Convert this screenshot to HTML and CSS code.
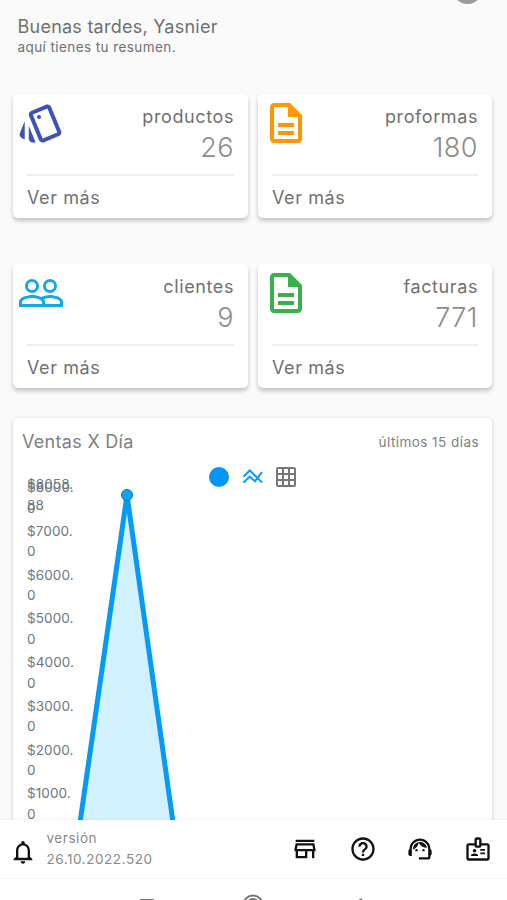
FILE: index.html
```html
<!DOCTYPE html>
<html lang="es">

<head>
    <meta charset="UTF-8">
    <meta name="viewport" content="width=device-width, initial-scale=1.0">
    <title>Resumen</title>
    <link rel="stylesheet" href="styles.css">
</head>

<body>
    <div class="app">
        <main class="content">
            <span class="avatar"></span>
            <header class="greeting">
                <h1>Buenas tardes, Yasnier</h1>
                <p>aquí tienes tu resumen.</p>
            </header>

            <section class="cards">
                <article class="card">
                    <div class="card-top">
                        <svg class="card-icon blue" viewBox="0 0 24 24">
                            <path d="M2.53 19.65l1.34.56v-9.03l-2.43 5.86c-.41 1.02.08 2.19 1.09 2.61zm19.5-3.7L17.07 3.98c-.31-.75-1.04-1.21-1.81-1.23-.26 0-.53.04-.79.15L7.1 5.95c-.75.31-1.21 1.03-1.23 1.8-.01.27.04.54.15.8l4.96 11.97c.31.76 1.05 1.22 1.83 1.23.26 0 .52-.05.77-.15l7.36-3.05c1.02-.42 1.51-1.59 1.09-2.6zm-9.2 3.8L7.87 7.79l7.35-3.04h.01l4.95 11.95-7.35 3.05zM5.88 19.75c0 1.1.9 2 2 2h1.45l-3.45-8.34v6.34z"/>
                            <circle cx="11" cy="9" r="1"/>
                        </svg>
                        <div class="card-data">
                            <h2>productos</h2>
                            <strong>26</strong>
                        </div>
                    </div>
                    <a class="more" href="#">Ver más</a>
                </article>

                <article class="card">
                    <div class="card-top">
                        <svg class="card-icon orange" viewBox="0 0 24 24">
                            <path d="M8 16h8v2H8zm0-4h8v2H8zm6-10H6c-1.1 0-2 .9-2 2v16c0 1.1.89 2 1.99 2H18c1.1 0 2-.9 2-2V8l-6-6zm4 18H6V4h7v5h5v11z"/>
                        </svg>
                        <div class="card-data">
                            <h2>proformas</h2>
                            <strong>180</strong>
                        </div>
                    </div>
                    <a class="more" href="#">Ver más</a>
                </article>

                <article class="card">
                    <div class="card-top">
                        <svg class="card-icon cyan" viewBox="0 0 24 24">
                            <path d="M16.5 13c-1.2 0-3.07.34-4.5 1-1.43-.67-3.3-1-4.5-1C5.33 13 1 14.08 1 16.25V19h22v-2.75c0-2.17-4.33-3.25-6.5-3.25zm-4 4.5h-10v-1.25c0-.54 2.56-1.75 5-1.75s5 1.21 5 1.75v1.25zm9 0H14v-1.25c0-.46-.2-.86-.52-1.22.88-.3 1.96-.53 3.02-.53 2.44 0 5 1.21 5 1.75v1.25z"/>
                            <circle class="ring" cx="7.5" cy="8.5" r="2.75"/>
                            <circle class="ring" cx="16.5" cy="8.5" r="2.75"/>
                        </svg>
                        <div class="card-data">
                            <h2>clientes</h2>
                            <strong>9</strong>
                        </div>
                    </div>
                    <a class="more" href="#">Ver más</a>
                </article>

                <article class="card">
                    <div class="card-top">
                        <svg class="card-icon green" viewBox="0 0 24 24">
                            <path d="M8 16h8v2H8zm0-4h8v2H8zm6-10H6c-1.1 0-2 .9-2 2v16c0 1.1.89 2 1.99 2H18c1.1 0 2-.9 2-2V8l-6-6zm4 18H6V4h7v5h5v11z"/>
                        </svg>
                        <div class="card-data">
                            <h2>facturas</h2>
                            <strong>771</strong>
                        </div>
                    </div>
                    <a class="more" href="#">Ver más</a>
                </article>
            </section>

            <section class="sales">
                <div class="sales-head">
                    <h2>Ventas X Día</h2>
                    <span>últimos 15 días</span>
                </div>
                <div class="legend">
                    <svg viewBox="0 0 24 24" class="legend-blue">
                        <circle cx="12" cy="12" r="10"/>
                    </svg>
                    <svg viewBox="0 0 24 24" class="legend-line">
                        <path d="M2.5 11.5l6.3-6L21 17.5M2.5 17.5l6.3-6 5.200 4.700L21 7"/>
                    </svg>
                    <svg viewBox="0 0 24 24" class="legend-grid">
                        <path d="M20 2H4c-1.1 0-2 .9-2 2v16c0 1.1.9 2 2 2h16c1.1 0 2-.9 2-2V4c0-1.1-.9-2-2-2zM8 20H4v-4h4v4zm0-6H4v-4h4v4zm0-6H4V4h4v4zm6 12h-4v-4h4v4zm0-6h-4v-4h4v4zm0-6h-4V4h4v4zm6 12h-4v-4h4v4zm0-6h-4v-4h4v4zm0-6h-4V4h4v4z"/>
                    </svg>
                </div>
                <div class="chart">
                    <ul class="axis">
                        <li class="axis-max">$8058.<br>88</li>
                        <li>$8000.<br>0</li>
                        <li>$7000.<br>0</li>
                        <li>$6000.<br>0</li>
                        <li>$5000.<br>0</li>
                        <li>$4000.<br>0</li>
                        <li>$3000.<br>0</li>
                        <li>$2000.<br>0</li>
                        <li>$1000.<br>0</li>
                    </ul>
                    <svg class="plot" width="400" height="360" viewBox="0 0 400 360">
                        <path class="area" d="M5.500 350L54 12l47.500 338z"/>
                        <path class="line" d="M5.500 350L54 12l47.500 338"/>
                        <circle class="dot" cx="54" cy="12" r="5.5"/>
                    </svg>
                </div>
            </section>
        </main>

        <footer class="toolbar">
            <svg class="bell" viewBox="0 0 24 24">
                <path d="M12 22c1.1 0 2-.9 2-2h-4c0 1.1.9 2 2 2zm6-6v-5c0-3.07-1.63-5.64-4.5-6.32V4c0-.83-.67-1.5-1.5-1.5s-1.5.67-1.5 1.5v.68C7.64 5.36 6 7.92 6 11v5l-2 2v1h16v-1l-2-2zm-2 1H8v-6c0-2.48 1.51-4.5 4-4.5s4 2.02 4 4.5v6z"/>
            </svg>
            <p class="version">versión<br>26.10.2022.520</p>
            <nav class="actions">
                <svg viewBox="0 0 24 24">
                    <path d="M18.36 9l.6 3H5.04l.6-3h12.72M20 4H4v2h16V4zm0 3H4l-1 5v2h1v6h10v-6h4v6h2v-6h1v-2l-1-5zM6 18v-4h6v4H6z"/>
                </svg>
                <svg viewBox="0 0 24 24">
                    <path d="M11 18h2v-2h-2v2zm1-16C6.48 2 2 6.48 2 12s4.48 10 10 10 10-4.48 10-10S17.52 2 12 2zm0 18c-4.41 0-8-3.59-8-8s3.59-8 8-8 8 3.59 8 8-3.59 8-8 8zm0-14c-2.21 0-4 1.79-4 4h2c0-1.1.9-2 2-2s2 .9 2 2c0 2-3 1.75-3 5h2c0-2.25 3-2.5 3-5 0-2.21-1.79-4-4-4z"/>
                </svg>
                <svg viewBox="0 0 24 24">
                    <path d="M21 12.22C21 6.73 16.74 3 12 3c-4.69 0-9 3.65-9 9.28-.6.34-1 .98-1 1.72v2c0 1.1.9 2 2 2h1v-6.1c0-3.87 3.13-7 7-7s7 3.13 7 7V19h-8v2h8c1.1 0 2-.9 2-2v-1.22c.59-.31 1-.92 1-1.64v-2.3c0-.7-.41-1.31-1-1.62z"/>
                    <circle cx="9" cy="13" r="1"/>
                    <circle cx="15" cy="13" r="1"/>
                    <path d="M18 11.03C17.52 8.18 15.04 6 12.05 6c-3.03 0-6.29 2.51-6.03 6.45 2.47-1.01 4.33-3.21 4.86-5.89 1.31 2.63 4 4.44 7.12 4.47z"/>
                </svg>
                <svg viewBox="0 0 24 24">
                    <path d="M14 12h4v1.5h-4zM14 15h4v1.5h-4zM20 7h-5V4c0-1.1-.9-2-2-2h-2c-1.1 0-2 .9-2 2v3H4c-1.1 0-2 .9-2 2v11c0 1.1.9 2 2 2h16c1.1 0 2-.9 2-2V9c0-1.1-.9-2-2-2zm-9-3h2v5h-2V4zm9 16H4V9h5c0 1.1.9 2 2 2h2c1.1 0 2-.9 2-2h5v11z"/>
                    <circle cx="9" cy="13.5" r="1.5"/>
                    <path d="M11.08 16.18C10.44 15.9 9.74 15.75 9 15.75s-1.44.15-2.08.43C6.36 16.42 6 16.96 6 17.57V18h6v-.43c0-.61-.36-1.15-.92-1.39z"/>
                </svg>
            </nav>
        </footer>

        <div class="system-bar">
            <svg width="507" height="21" viewBox="0 0 507 21">
                <path d="M140 21h14"/>
                <circle cx="253" cy="26" r="9.500"/>
                <circle cx="253" cy="26" r="6"/>
                <path d="M357 23l5-3"/>
            </svg>
        </div>
    </div>
</body>

</html>
```
FILE: styles.css
```css
* {
    box-sizing: border-box;
    margin: 0;
    padding: 0;
}

body {
    font-family: "Inter", sans-serif;
    background-color: #fafafa;
    color: #707070;
}

.app {
    display: flex;
    flex-direction: column;
    height: 900px;
    overflow: hidden;
}

.content {
    position: relative;
    flex: 1;
    min-height: 0;
    overflow: hidden;
    padding: 15px 15px 0 13px;
}

.avatar {
    position: absolute;
    top: -24px;
    right: 25px;
    width: 29px;
    height: 28px;
    border-radius: 50%;
    background-color: #9b9b9b;
}

.greeting {
    height: 79px;
    padding-left: 4.5px;
}

.greeting h1 {
    font-size: 18px;
    font-weight: 400;
    line-height: 24px;
    letter-spacing: 0.24px;
}

.greeting p {
    font-size: 13.5px;
    line-height: 16px;
    letter-spacing: 0.42px;
}

/* Summary cards */
.cards {
    display: grid;
    grid-template-columns: 235px 234px;
    column-gap: 10px;
    row-gap: 46px;
}

.card {
    height: 124px;
    padding: 0 14px;
    background-color: #fff;
    border-radius: 5px;
    box-shadow: 0 3px 4px rgba(0, 0, 0, 0.22);
}

.card-top {
    display: flex;
    justify-content: space-between;
    height: 82px;
    border-bottom: 2px solid #eee;
}

.card-icon {
    width: 48px;
    height: 48px;
    margin: 5px 0 0 -10px;
    fill: currentColor;
}

.blue { color: #3f51b5; }
.orange { color: #ff9800; }
.cyan { color: #14a9e1; }
.green { color: #39b04a; }

.ring {
    fill: none;
    stroke: currentColor;
    stroke-width: 1.5;
}

.card-data {
    padding-top: 10px;
    text-align: right;
}

.card-data h2 {
    font-size: 18px;
    font-weight: 400;
    line-height: 25px;
    letter-spacing: 0.6px;
}

.card-data strong {
    display: block;
    font-size: 27px;
    font-weight: 300;
    line-height: 37px;
    letter-spacing: 0.5px;
    color: #8c8c8c;
}

.more {
    display: block;
    font-size: 18px;
    line-height: 43px;
    letter-spacing: 0.6px;
    color: #707070;
    text-decoration: none;
}

/* Sales chart */
.sales {
    width: 479px;
    height: 460px;
    margin-top: 30px;
    background-color: #fff;
    border-radius: 5px;
    box-shadow: 0 1px 4px rgba(0, 0, 0, 0.18);
}

.sales-head {
    display: flex;
    align-items: center;
    justify-content: space-between;
    height: 47px;
    padding: 0 13px 0 9px;
    color: #808080;
}

.sales-head h2 {
    font-size: 18px;
    font-weight: 400;
    letter-spacing: 0.3px;
}

.sales-head span {
    font-size: 13.5px;
    letter-spacing: 0.45px;
}

.legend {
    display: flex;
    justify-content: center;
    gap: 9.5px;
    height: 18px;
}

.legend svg {
    width: 24px;
    height: 24px;
}

.legend-blue {
    fill: #0596f5;
}

.legend-line {
    fill: none;
    stroke: #0c9af0;
    stroke-width: 2;
}

.legend-grid {
    fill: #777;
}

.chart {
    display: flex;
}

.axis {
    width: 60px;
    margin-top: -9px;
    padding-left: 14px;
    list-style: none;
    font-size: 13.5px;
    line-height: 20.5px;
    letter-spacing: 0.1px;
    color: #6b7880;
}

.axis li {
    height: 43.75px;
}

/* the maximum sits right on top of the last step */
.axis .axis-max {
    height: 3px;
}

.area {
    fill: #d2f1ff;
}

.line {
    fill: none;
    stroke: #049bf5;
    stroke-width: 5;
}

.dot {
    fill: #03a9f4;
    stroke: #1375a8;
    stroke-width: 1;
}

/* Bottom bars */
.toolbar {
    display: flex;
    align-items: center;
    height: 59px;
    padding: 0 15px 0 9px;
    background-color: #fff;
    border-bottom: 1px solid #f3f3f3;
    box-shadow: 0 -1px 2px rgba(0, 0, 0, 0.04);
    z-index: 1;
}

.toolbar svg {
    width: 28px;
    height: 28px;
    fill: #111;
}

.toolbar .bell {
    margin-top: 5px;
}

.version {
    margin-left: 9.5px;
    font-size: 13.5px;
    line-height: 21.5px;
    letter-spacing: 0.55px;
    color: #888;
}

.actions {
    display: flex;
    gap: 29.6px;
    margin-left: auto;
}

.system-bar {
    height: 21px;
    background-color: #fff;
}

.system-bar svg {
    display: block;
    fill: none;
    stroke: #777;
    stroke-width: 2;
}
```
